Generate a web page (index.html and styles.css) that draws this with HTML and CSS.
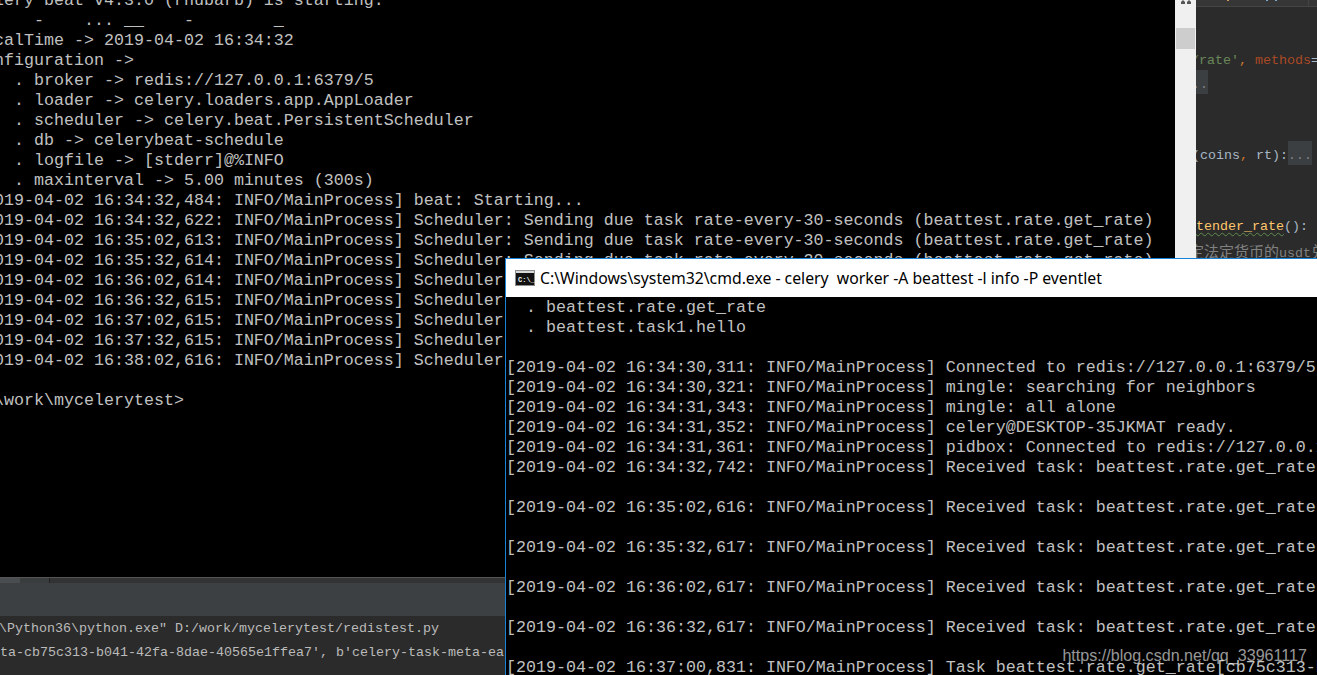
FILE: index.html
```html
<!DOCTYPE html>
<html lang="en">
<head>
<meta charset="utf-8">
<title>celery</title>
<link rel="stylesheet" href="styles.css">
</head>
<body>
<main class="desktop">

  <section class="ide-code">
    <div class="ide-tabs"><i class="tick tick-a"></i><i class="tick tick-b"></i><i class="tick tick-b"></i><i class="tab-edge"></i></div>
    <div class="code-body">
      <div class="code-row shift-str"><span class="c-str">/rate'</span><span class="c-kw">, </span><span class="c-param">methods</span><span class="c-plain">=</span></div>
      <div class="code-row shift-fold"><span class="fold">...</span></div>
      <div class="code-row"></div>
      <div class="code-row"></div>
      <div class="code-row shift-args"><span class="c-plain">(coins</span><span class="c-kw">, </span><span class="c-plain">rt):</span><span class="fold">...</span></div>
      <div class="code-row"></div>
      <div class="code-row"></div>
      <div class="code-row"><span class="c-fn wavy">tender_rate</span><span class="c-plain">():</span></div>
      <div class="code-row shift-cjk"><span class="c-doc cjk">定法定货币的</span><span class="c-doc wavy">usdt</span><span class="c-doc cjk">兑</span></div>
    </div>
  </section>

  <section class="console-back">
    <div class="term term-back">
      <div class="ln">celery beat v4.3.0 (rhubarb) is starting.</div>
      <div class="ln">      -    ... __    -        _</div>
      <div class="ln">LocalTime -&gt; 2019-04-02 16:34:32</div>
      <div class="ln">Configuration -&gt;</div>
      <div class="ln">    . broker -&gt; redis://127.0.0.1:6379/5</div>
      <div class="ln">    . loader -&gt; celery.loaders.app.AppLoader</div>
      <div class="ln">    . scheduler -&gt; celery.beat.PersistentScheduler</div>
      <div class="ln">    . db -&gt; celerybeat-schedule</div>
      <div class="ln">    . logfile -&gt; [stderr]@%INFO</div>
      <div class="ln">    . maxinterval -&gt; 5.00 minutes (300s)</div>
      <div class="ln">[2019-04-02 16:34:32,484: INFO/MainProcess] beat: Starting...</div>
      <div class="ln">[2019-04-02 16:34:32,622: INFO/MainProcess] Scheduler: Sending due task rate-every-30-seconds (beattest.rate.get_rate)</div>
      <div class="ln">[2019-04-02 16:35:02,613: INFO/MainProcess] Scheduler: Sending due task rate-every-30-seconds (beattest.rate.get_rate)</div>
      <div class="ln">[2019-04-02 16:35:32,614: INFO/MainProcess] Scheduler: Sending due task rate-every-30-seconds (beattest.rate.get_rate)</div>
      <div class="ln">[2019-04-02 16:36:02,614: INFO/MainProcess] Scheduler: Sending due task rate-every-30-seconds (beattest.rate.get_rate)</div>
      <div class="ln">[2019-04-02 16:36:32,615: INFO/MainProcess] Scheduler: Sending due task rate-every-30-seconds (beattest.rate.get_rate)</div>
      <div class="ln">[2019-04-02 16:37:02,615: INFO/MainProcess] Scheduler: Sending due task rate-every-30-seconds (beattest.rate.get_rate)</div>
      <div class="ln">[2019-04-02 16:37:32,615: INFO/MainProcess] Scheduler: Sending due task rate-every-30-seconds (beattest.rate.get_rate)</div>
      <div class="ln">[2019-04-02 16:38:02,616: INFO/MainProcess] Scheduler: Sending due task rate-every-30-seconds (beattest.rate.get_rate)</div>
      <div class="ln"> </div>
      <div class="ln">D:\work\mycelerytest&gt;</div>
    </div>
  </section>

  <aside class="scrollbar">
    <svg class="scroll-arrow" width="10" height="4" viewBox="0 0 10 4" aria-hidden="true"><path d="M0 4 L0 2 L2 0 L4 2 L4 4 Z M6 4 L6 2 L8 0 L10 2 L10 4 Z" fill="#555"/></svg>
    <div class="scroll-thumb"></div>
  </aside>

  <section class="ide-run">
    <div class="run-strip"><span class="run-strip-tab"></span><span class="run-strip-rest"></span></div>
    <div class="run-toolbar"></div>
    <div class="run-output">
      <div class="run-line run-line-a">\Python36\python.exe" D:/work/mycelerytest/redistest.py</div>
      <div class="run-line">ta-cb75c313-b041-42fa-8dae-40565e1ffea7', b'celery-task-meta-ea</div>
    </div>
  </section>

  <section class="cmd-window">
    <header class="cmd-title">
      <svg class="cmd-icon" width="20" height="16" viewBox="0 0 20 16" aria-hidden="true">
        <rect width="20" height="16" fill="#8c8c8c"/>
        <rect x="1" y="1" width="18" height="2" fill="#d8d8d8"/>
        <rect x="1" y="3" width="18" height="12" fill="#111"/>
        <text x="3" y="12" class="cmd-icon-text">C:\_</text>
      </svg>
      <span class="cmd-caption">C:\Windows\system32\cmd.exe - celery  worker -A beattest -l info -P eventlet</span>
    </header>
    <div class="term term-front">
      <div class="ln">  . beattest.rate.get_rate</div>
      <div class="ln">  . beattest.task1.hello</div>
      <div class="ln"> </div>
      <div class="ln">[2019-04-02 16:34:30,311: INFO/MainProcess] Connected to redis://127.0.0.1:6379/5</div>
      <div class="ln">[2019-04-02 16:34:30,321: INFO/MainProcess] mingle: searching for neighbors</div>
      <div class="ln">[2019-04-02 16:34:31,343: INFO/MainProcess] mingle: all alone</div>
      <div class="ln">[2019-04-02 16:34:31,352: INFO/MainProcess] celery@DESKTOP-35JKMAT ready.</div>
      <div class="ln">[2019-04-02 16:34:31,361: INFO/MainProcess] pidbox: Connected to redis://127.0.0.1:6379/5.</div>
      <div class="ln">[2019-04-02 16:34:32,742: INFO/MainProcess] Received task: beattest.rate.get_rate[cb75c313-b041]</div>
      <div class="ln"> </div>
      <div class="ln">[2019-04-02 16:35:02,616: INFO/MainProcess] Received task: beattest.rate.get_rate[cb75c313-b041]</div>
      <div class="ln"> </div>
      <div class="ln">[2019-04-02 16:35:32,617: INFO/MainProcess] Received task: beattest.rate.get_rate[cb75c313-b041]</div>
      <div class="ln"> </div>
      <div class="ln">[2019-04-02 16:36:02,617: INFO/MainProcess] Received task: beattest.rate.get_rate[cb75c313-b041]</div>
      <div class="ln"> </div>
      <div class="ln">[2019-04-02 16:36:32,617: INFO/MainProcess] Received task: beattest.rate.get_rate[cb75c313-b041]</div>
      <div class="ln"> </div>
      <div class="ln">[2019-04-02 16:37:00,831: INFO/MainProcess] Task beattest.rate.get_rate[cb75c313-b041]</div>
    </div>
  </section>

  <div class="watermark">https://blog.csdn.net/qq_33961117</div>
</main>
</body>
</html>
```

FILE: styles.css
```css
html, body {
  margin: 0;
  padding: 0;
  background: #000;
  overflow: hidden;
}

.desktop {
  position: relative;
  width: 1317px;
  height: 675px;
  overflow: hidden;
  background: #000;
}

/* terminal text */
.term {
  font-family: "Liberation Mono", monospace;
  font-size: 16.66px;
  line-height: 20px;
  color: #c0c0c0;
}

.ln {
  height: 20px;
  white-space: pre;
}

/* back console window */
.console-back {
  position: absolute;
  left: 0;
  top: 0;
  width: 1175px;
  height: 577px;
  overflow: hidden;
  background: #000;
}

.term-back {
  margin: -9px 0 0 -26px;
}

/* scrollbar of the back console */
.scrollbar {
  position: absolute;
  left: 1175px;
  top: 0;
  width: 21px;
  height: 258px;
  background: #f0f0f0;
}

.scroll-arrow {
  position: absolute;
  left: 6px;
  top: 0;
}

.scroll-thumb {
  position: absolute;
  left: 1px;
  top: 28px;
  width: 19px;
  height: 21px;
  background: #cdcdcd;
}

/* IDE editor at the right */
.ide-code {
  position: absolute;
  left: 1196px;
  top: 0;
  width: 121px;
  height: 258px;
  overflow: hidden;
  background: #2b2b2b;
}

.ide-tabs {
  display: flex;
  align-items: flex-start;
  height: 6px;
  background: #363636;
  border-bottom: 1px solid #444;
}

.tick {
  display: block;
  width: 2px;
  height: 1px;
}

.tick-a {
  margin-left: 31px;
  background: #cc9a5a;
}

.tick-b {
  margin-left: 7px;
  background: #7aa6c8;
}

.tick-a + .tick-b {
  margin-left: 37px;
}

.tab-edge {
  display: block;
  width: 1px;
  height: 6px;
  margin-left: 31px;
  background: #444;
}

.code-body {
  padding-top: 42px;
  font-family: "Liberation Mono", monospace;
  font-size: 13.33px;
  line-height: 23.75px;
}

.code-row {
  height: 23.75px;
  white-space: pre;
}

.shift-str { margin-left: -5px; }
.shift-fold { margin-left: -12px; }
.shift-args { margin-left: -4px; }
.shift-cjk { margin-left: -7px; }

.c-str { color: #6a8759; }
.c-kw { color: #cc7832; }
.c-param { color: #aa4926; }
.c-plain { color: #a9b7c6; }
.c-fn { color: #ffc66d; }
.c-doc { color: #808080; }

.cjk {
  font-family: "Noto Sans CJK SC", sans-serif;
  font-size: 15px;
}

.wavy {
  text-decoration: underline wavy #5f8c4a 1px;
  text-underline-offset: 2px;
}

.fold {
  display: inline-block;
  height: 23.75px;
  background: linear-gradient(#3c3f41 0 20.75px, transparent 0);
  box-shadow: 0 -3px 0 #3c3f41;
  color: #808080;
}

/* IDE run panel */
.ide-run {
  position: absolute;
  left: 0;
  top: 577px;
  width: 505px;
  height: 98px;
  overflow: hidden;
  display: flex;
  flex-direction: column;
  background: #2b2b2b;
}

.run-strip {
  display: flex;
  height: 5px;
  border-top: 1px solid #555;
  background: #333;
}

.run-strip-tab {
  display: block;
  width: 20px;
  background: #4a4d4f;
}

.run-strip-rest {
  display: block;
  width: 29px;
  background: #3a3d3e;
  border-right: 1px solid #222;
}

.run-toolbar {
  height: 33px;
  background: #3c4043;
}

.run-output {
  padding-top: 1px;
  font-family: "Liberation Mono", monospace;
  font-size: 13.33px;
  line-height: 24px;
  color: #bbb;
}

.run-line {
  height: 24px;
  white-space: pre;
}

.run-line-a {
  margin-left: -1px;
}

/* front cmd window */
.cmd-window {
  position: absolute;
  left: 505px;
  top: 258px;
  width: 812px;
  height: 417px;
  overflow: hidden;
  background: #000;
  border-top: 1px solid #1883d7;
  border-left: 1px solid #1883d7;
  box-sizing: border-box;
}

.cmd-title {
  display: flex;
  align-items: center;
  gap: 5px;
  height: 38px;
  padding-left: 9px;
  background: #fff;
  box-sizing: border-box;
}

.cmd-icon {
  display: block;
  flex: none;
}

.cmd-icon-text {
  font-family: "Liberation Mono", monospace;
  font-size: 7px;
  font-weight: 700;
  fill: #eee;
}

.cmd-caption {
  font-family: "Noto Sans", sans-serif;
  font-size: 15.77px;
  color: #000;
  white-space: pre;
}

.term-front {
  padding-top: 1px;
}

/* watermark */
.watermark {
  position: absolute;
  right: 10px;
  top: 644px;
  font-family: "Liberation Sans", sans-serif;
  font-size: 16.1px;
  line-height: 22px;
  color: rgba(255, 255, 255, 0.6);
  white-space: pre;
}
```
